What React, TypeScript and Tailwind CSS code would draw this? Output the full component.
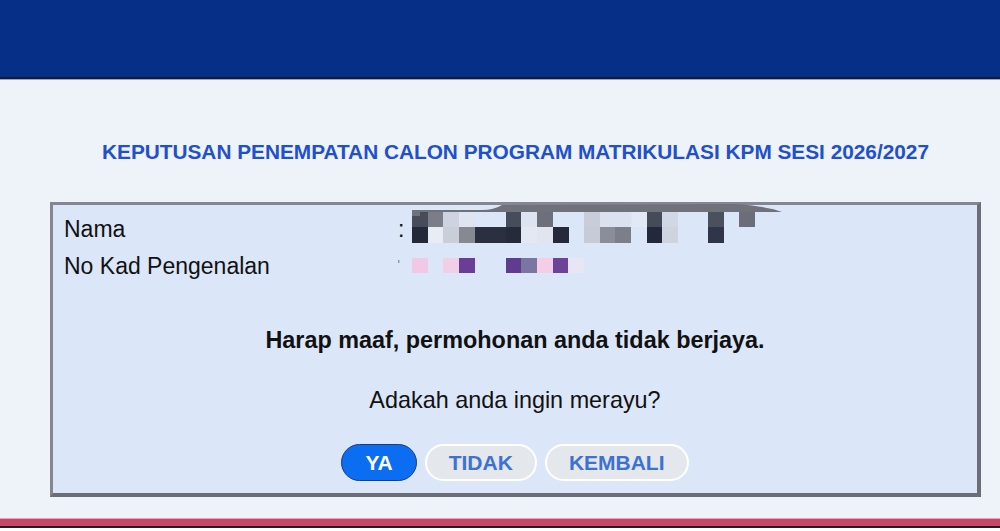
import React from "react";

const nameTop: [number, string][] = [
  [14, "#474c5a"], [30, "#7b7e89"], [45, "#cdd3e1"], [61, "#dfe4f0"],
  [108, "#474c5a"], [123, "#dde3f0"], [139, "#6d707b"],
  [186, "#c9cdd9"], [202, "#dbe1ee"], [217, "#dbe1ee"], [234, "#e2e8f4"],
  [249, "#464b59"], [264, "#d1d7e4"], [310, "#4b505d"], [341, "#6b6e79"],
];

const nameBottom: [number, string][] = [
  [14, "#242939"], [30, "#e8ecf5"], [45, "#c9ced9"], [61, "#868992"],
  [77, "#2b3041"], [93, "#2b3041"], [108, "#262b3b"], [123, "#e3e8f3"],
  [139, "#e0e5f0"], [155, "#25293a"], [186, "#c7cbd7"], [202, "#8b8e98"],
  [217, "#7b7f8a"], [249, "#23283a"], [264, "#ced3dd"], [310, "#30354a"],
];

const icBlocks: [number, string][] = [
  [16, "#f1c8e5"], [47, "#f3cfe7"], [63, "#6a3e97"], [110, "#603b8f"],
  [125, "#7b75a1"], [141, "#f6cde7"], [157, "#6c4399"], [172, "#e8e6f4"],
];

// pixelated blur over the candidate's name
function NameMosaic() {
  return (
    <svg width="400" height="46" viewBox="0 0 400 46" className="absolute left-[345px] top-[-11px]">
      <path d="M14 18 Q14 10 22 10 L84 10 Q96 10 104 5 L340 4 Q372 7 384 12 L14 12 Z" fill="#6f717b" />
      {nameTop.map(([x, c]) => (
        <rect key={"t" + x} x={x} y={12} width={16} height={15} fill={c} />
      ))}
      <rect x={14} y={10} width={8} height={6} fill="#6f717b" />
      {nameBottom.map(([x, c]) => (
        <rect key={"b" + x} x={x} y={27} width={16} height={16} fill={c} />
      ))}
    </svg>
  );
}

function IcMosaic() {
  return (
    <svg width="200" height="22" viewBox="0 0 200 22" className="absolute left-[343px] top-[7px]">
      <rect x={2} y={5} width={1.5} height={3} fill="#9a9aa5" />
      {icBlocks.map(([x, c]) => (
        <rect key={x} x={x} y={3} width={16} height={15} fill={c} />
      ))}
    </svg>
  );
}

export default function App() {
  return (
    <div className="flex h-[531px] w-[1000px] flex-col overflow-hidden bg-[#eef2f9] font-['Liberation_Sans',Arial,sans-serif] text-[#111]">
      <header className="h-[80px] shrink-0 border-b border-[#9aa1b8]">
        <div className="h-[77px] bg-[#062f87]" />
        <div className="h-[2px] bg-[#101a3a]" />
      </header>

      <main className="h-[438px] shrink-0">
        <div className="ml-[50px] w-[931px]">
          <h1 className="mt-[60px] text-center text-[20.8px] font-bold leading-[24px] text-[#2150cc]">
            KEPUTUSAN PENEMPATAN CALON PROGRAM MATRIKULASI KPM SESI 2026/2027
          </h1>

          <section className="mt-[38px] border-[3px] border-r-4 border-b-4 border-[#85868f] border-r-[#6c6d76] border-b-[#6c6d76] bg-[#dbe6f8] pt-[6px] pb-[12px]">
            <div className="relative flex h-[37px] items-center pl-[11px] text-[23px] leading-[37px]">
              <span className="w-[334px]">Nama</span>
              <span>:</span>
              <NameMosaic />
            </div>
            <div className="relative flex h-[37px] items-center pl-[11px] text-[23px] leading-[37px]">
              <span className="w-[334px]">No Kad Pengenalan</span>
              <IcMosaic />
            </div>

            <p className="mt-[40px] text-center text-[23.4px] font-bold leading-[30px]">
              Harap maaf, permohonan anda tidak berjaya.
            </p>
            <p className="mt-[30px] text-center text-[23.4px] leading-[30px]">Adakah anda ingin merayu?</p>

            <div className="mt-[29px] flex justify-center gap-[8px] text-[21px] font-bold">
              <button className="h-[37px] rounded-full border border-[#1a3c86] bg-[#0b6df2] px-[23px] text-white">
                YA
              </button>
              <button className="h-[37px] rounded-full border-2 border-white bg-[#e4e7ec] px-[22px] text-[#3d71d4]">
                TIDAK
              </button>
              <button className="h-[37px] rounded-full border-2 border-white bg-[#e4e7ec] px-[22px] text-[#3d71d4]">
                KEMBALI
              </button>
            </div>
          </section>
        </div>
      </main>

      <footer className="flex-1 bg-white">
        <div className="h-px bg-[#eaa2b8]" />
        <div className="h-[7px] bg-[#c9466b]" />
        <div className="h-[1.5px] bg-[#1d1d22]" />
      </footer>
    </div>
  );
}
